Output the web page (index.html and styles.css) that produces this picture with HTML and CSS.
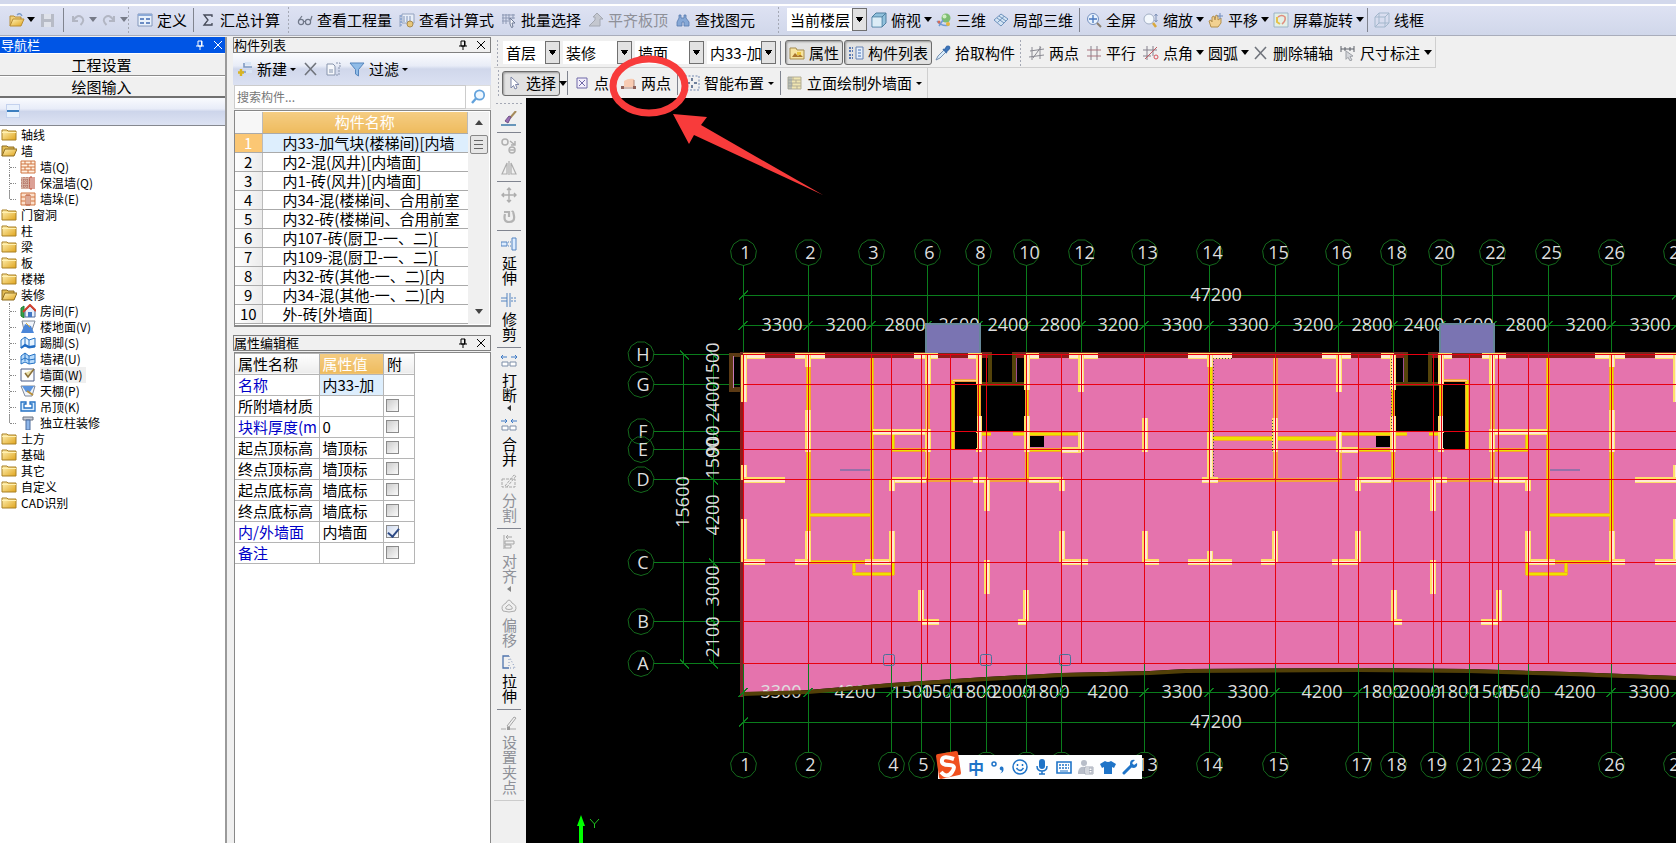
FILE: index.html
```html
<!DOCTYPE html>
<html lang="zh-CN">
<head>
<meta charset="utf-8">
<title>绘图输入</title>
<link rel="stylesheet" href="styles.css">
</head>
<body>
<svg class="sprite" aria-hidden="true">
  <defs>
    <linearGradient id="gold" x1="0" y1="0" x2="1" y2="1"><stop offset="0" stop-color="#fff3b8"/><stop offset="1" stop-color="#e0a41c"/></linearGradient>
  </defs>
  <symbol id="open" viewBox="0 0 16 16"><path d="M1 14V4h4l1 1h6v3" fill="#f0cf78" stroke="#b98e36"/><path d="M1 14l3-7h11l-3 7z" fill="url(#gold)" stroke="#b98e36"/><path d="M8 3q3-3 5 1" fill="none" stroke="#7d9cc9" stroke-width="1.4"/></symbol>
  <symbol id="save" viewBox="0 0 16 16"><path d="M1 2h13v13H1z" fill="#b7bbc6"/><path d="M4 2h7v5H4zM4 10h7v5H4z" fill="#dfe2ea"/></symbol>
  <symbol id="undo" viewBox="0 0 16 16"><path d="M2 4v5h5M2.500 8q4-6 8-3t-1 8" fill="none" stroke="#b2b6c3" stroke-width="2"/></symbol>
  <symbol id="redo" viewBox="0 0 16 16"><path d="M12 4v5H7M11.500 8q-4-6-8-3t1 8" fill="none" stroke="#b2b6c3" stroke-width="2"/></symbol>
  <symbol id="define" viewBox="0 0 16 16"><path d="M1 2h14v12H1z" fill="#e9f1fb" stroke="#8296ba"/><path d="M1 2h14v2H1z" fill="#8ca9d6"/><path d="M3 6h4v2H3zM9 6h4v2H9zM3 10h4v2H3zM9 10h4v2H9z" fill="#6b8cc4"/></symbol>
  <symbol id="sum" viewBox="0 0 16 16"><path d="M12 5V3H4l4 5-4 5h8v-2" fill="none" stroke="#444a58" stroke-width="1.300"/></symbol>
  <symbol id="glasses" viewBox="0 0 16 16"><g fill="none" stroke="#6f7788" stroke-width="1.200"><circle cx="4" cy="10" r="2.600"/><circle cx="11" cy="10" r="2.600"/><path d="M6.500 9.500h2M2 8l3-4M13.400 9L15 4"/></g></symbol>
  <symbol id="formula" viewBox="0 0 16 16"><path d="M1 3v12M3 2h12v9H3z" fill="#e8eef8" stroke="#93a2be"/><path d="M5 4v6M8 4v6M11 4v6" stroke="#7f93b8"/><circle cx="11" cy="12" r="3" fill="#e8c77a" stroke="#a88b4f"/><path d="M2 3v11" stroke="#6f93cc" stroke-dasharray="2 1"/></symbol>
  <symbol id="batch" viewBox="0 0 16 16"><path d="M1 3h13M1 6h13M1 9h7M2 2v10M5 2v10M8 2v6M12 2v5" stroke="#8d99b4"/><path d="M9 6l5 5h-3l1 4-1.500.5L9 12z" fill="#f4f6fb" stroke="#6f7b95"/></symbol>
  <symbol id="slab" viewBox="0 0 16 16"><path d="M1 14h11V7h3L9 1 5 5h2v3z" fill="#c4c7cf" stroke="#a4a8b2"/></symbol>
  <symbol id="find" viewBox="0 0 16 16"><path d="M4 3h2v3h3V3h2v3l3 4v4H9v-4H7v4H2v-4l2-4z" fill="#86a8d6" stroke="#5678ad" stroke-width=".8"/></symbol>
  <symbol id="cube" viewBox="0 0 16 16"><path d="M1 5l4-4h10v10l-4 4H1z" fill="#8fc0dc" stroke="#4f7f9f"/><path d="M1 5h10v10M11 5l4-4" fill="none" stroke="#4f7f9f"/><path d="M1.500 5.500h9v9h-9z" fill="#dcecf6"/></symbol>
  <symbol id="orbit" viewBox="0 0 16 16"><circle cx="10" cy="6" r="4.500" fill="#7dbd72"/><circle cx="8.500" cy="4.500" r="2" fill="#cfeec2"/><path d="M1 9q5 6 12 4M3 14l4-6" fill="none" stroke="#6f9bd6" stroke-width="1.500"/><circle cx="12" cy="12" r="2" fill="#e7b73e"/><circle cx="3" cy="10" r="1.500" fill="#d66a54"/></symbol>
  <symbol id="part3d" viewBox="0 0 16 16"><path d="M1 8l7-6 7 5-7 7z" fill="#d3e4f4" stroke="#6f93bd"/><path d="M4 6l7 5M6 4l7 5M4.500 10.500L11 4.500" stroke="#6f93bd"/></symbol>
  <symbol id="fit" viewBox="0 0 16 16"><circle cx="7" cy="7" r="5.500" fill="#e8f2fd" stroke="#7590bf"/><path d="M7 3v8M3 7h8" stroke="#4877bf" stroke-width="1.300"/><path d="M11 11l4 4" stroke="#8a7f70" stroke-width="2"/></symbol>
  <symbol id="zoom" viewBox="0 0 16 16"><circle cx="6" cy="7" r="5" fill="#f3f8fd" stroke="#a3b0c5"/><path d="M10 11l3 4" stroke="#d9a83c" stroke-width="2.500"/><path d="M13 2v8M11.500 4L13 2l1.500 2M11.500 8l1.500 2 1.500-2" fill="none" stroke="#7f93b8"/></symbol>
  <symbol id="hand" viewBox="0 0 16 16"><path d="M3 15L1 9l2-1 1 2V5l2-1 1 4 1-5 2 1v4l3-2v5l-3 4z" fill="#f2d190" stroke="#b4904d"/><path d="M12 1v6M9 4h6" stroke="#6f8cbd"/></symbol>
  <symbol id="spin" viewBox="0 0 16 16"><path d="M1 1h14v14H1z" fill="#e3efe6" stroke="#9cb3c5"/><path d="M5 5q4-3 7 0 1 4-3 7" fill="none" stroke="#e08d7e" stroke-width="1.600"/><path d="M4 5v5l3 2" fill="none" stroke="#e5c24c" stroke-width="2"/></symbol>
  <symbol id="wire" viewBox="0 0 16 16"><path d="M1 5l4-4h10v10l-4 4H1zM1 5h10v10M11 5l4-4M5 1v10h10M5 11l-4 4" fill="none" stroke="#a3b7cc"/></symbol>
  <symbol id="props" viewBox="0 0 16 16"><path d="M1 3h6l1 2h7v9H1z" fill="#f6e3a0" stroke="#a58b4e"/><path d="M3 12l3-4 3 3 2-2 3 3z" fill="#a9752e"/><path d="M8 7h4v3H8z" fill="#e9c53e"/></symbol>
  <symbol id="list" viewBox="0 0 16 16"><path d="M1 3h4M1 6h4M1 10h4M1 13h4" stroke="#5a7bb5" stroke-width="2" stroke-dasharray="2 1"/><path d="M8 2h7v12H8z" fill="#e4eefb" stroke="#6682b2"/><path d="M10 5h3M10 8h3M10 11h3" stroke="#4470b4"/></symbol>
  <symbol id="pick" viewBox="0 0 16 16"><path d="M1 15l2-4 6-6 2 2-6 6z" fill="#d9ecfb" stroke="#7590b0"/><path d="M8 4l4 4M9.500 5L12 1.500q3-1 2.500 2L11 7z" fill="#3c79c4" stroke="#3c6fae" stroke-width="1.500"/></symbol>
  <symbol id="two-axis" viewBox="0 0 16 16"><path d="M3 2v13M11 1v13M0 12l15-2M1 6l14-2M4 13l8-11" stroke="#8a8a92" fill="none"/></symbol>
  <symbol id="parallel" viewBox="0 0 16 16"><path d="M5 1v14M11 1v14" stroke="#85808c"/><path d="M1 5h14M1 11h14" stroke="#a9757e"/></symbol>
  <symbol id="angle" viewBox="0 0 16 16"><path d="M4 1v14M10 1v10M0 5h14M0 11h8" stroke="#85808c"/><path d="M2 14L14 2" stroke="#c25a62"/><circle cx="13" cy="12" r="2" fill="none" stroke="#d8545c"/></symbol>
  <symbol id="cross" viewBox="0 0 16 16"><path d="M2 2l11 12M13 2L2 14" stroke="#70747c" stroke-width="1.600"/></symbol>
  <symbol id="dim" viewBox="0 0 16 16"><path d="M1 1v6M14 1v6M1 4h13M5 2v4M10 2v4" stroke="#5c6068"/><path d="M6 6l7 5-3 .5 2 3.500-2 .8-2-3.500-2 2z" fill="#d4d6da" stroke="#9da0a6"/></symbol>
  <symbol id="cursor" viewBox="0 0 16 16"><path d="M5 2v11l2.500-2.500L9 14l2-1-1.500-3.500H13z" fill="#fff" stroke="#7d86a8"/></symbol>
  <symbol id="point" viewBox="0 0 16 16"><path d="M3 3h10v10H3zM5 5l6 6M11 5l-6 6" fill="#f3effb" stroke="#6f68a8"/></symbol>
  <symbol id="two-point" viewBox="0 0 16 16"><path d="M3 6q4-3 10-2v8H3z" fill="#f8cbb2"/><path d="M1 13h13M13 5v7" stroke="#b08476"/><path d="M0 11h3v3H0zM12 11h3v3h-3z" fill="#8d6058"/></symbol>
  <symbol id="smart" viewBox="0 0 16 16"><path d="M1 1h14v14H1z" fill="none" stroke="#7389b0" stroke-dasharray="2 1.500"/><path d="M8 3v3M8 10v3M3 8h3M10 8h3" stroke="#43597f" stroke-width="1.500"/></symbol>
  <symbol id="facade" viewBox="0 0 16 16"><path d="M1 2h13v12H1z" fill="#f0e6b2" stroke="#b3ad94"/><path d="M1 5h13M1 8h13M1 11h13M6 2v3M9 5v3M5 8v3M10 11v3" stroke="#b3ad94"/><path d="M1 2h4v12H1z" fill="#8797ae" opacity=".5"/></symbol>
  <symbol id="new" viewBox="0 0 16 16"><path d="M7 2v4h8M5 11h10" stroke="#7f9ac2" stroke-width="1.600" fill="none"/><path d="M8 1h6v3H8zM9 9h6v3H9z" fill="#d8e5f5"/><path d="M4 8v7M1 11.500h6" stroke="#d8b423" stroke-width="2.400"/></symbol>
  <symbol id="copy" viewBox="0 0 16 16"><path d="M1 3h6l2 2v9H1z" fill="#f5f7fb" stroke="#8895ad"/><path d="M3 8h4v4H3z" fill="#bcc5d4"/><path d="M10 2h4v5h-3M13 9v5h-3" stroke="#8895ad" fill="none" stroke-dasharray="2 1"/></symbol>
  <symbol id="funnel" viewBox="0 0 16 16"><path d="M1 2h14L9.500 8.500V15l-3-2V8.500z" fill="#90bce8" stroke="#5585bd"/></symbol>
  <symbol id="lens" viewBox="0 0 16 16"><circle cx="9.500" cy="6" r="4.700" fill="#eef7ff" stroke="#62a2dc" stroke-width="1.700"/><path d="M6 9.500L2 14" stroke="#62a2dc" stroke-width="2.400"/></symbol>
  <symbol id="pin" viewBox="0 0 10 10"><path d="M3 1h4v5H3zM1 6h8M5 6v4M6.500 1v5" fill="none" stroke="currentColor"/></symbol>
  <symbol id="close" viewBox="0 0 10 10"><path d="M1 1l8 8M9 1L1 9" stroke="currentColor"/></symbol>
  <symbol id="folder" viewBox="0 0 16 14"><path d="M1 12V2h5l1 1h8v9z" fill="url(#gold)" stroke="#a98025"/><path d="M1 4.500h14" stroke="#fff0b0"/></symbol>
  <symbol id="folder-open" viewBox="0 0 16 14"><path d="M1 12V2h5l1 1h6v2" fill="#e3bd55" stroke="#8e6c20"/><path d="M1 12l3-7h12l-3 7z" fill="url(#gold)" stroke="#8e6c20"/></symbol>
  <symbol id="wall" viewBox="0 0 16 14"><path d="M1 1h14v12H1zM1 4h14M1 7h14M1 10h14M5 1v3M11 1v3M8 4v3M5 7v3M11 7v3M8 10v3" fill="#fff1e2" stroke="#cf7440"/></symbol>
  <symbol id="wall-warm" viewBox="0 0 16 14"><path d="M1 1h9v12H1z" fill="#d6b0a0"/><path d="M1 4h9M1 7h9M1 10h9M4 1v12M7 1v12" stroke="#a8675a" stroke-dasharray="1 1"/><path d="M10 1h2v12h-2zM14 1v12" fill="#fff" stroke="#b8432c"/></symbol>
  <symbol id="wall-pier" viewBox="0 0 16 14"><path d="M1 1h14v12H1zM1 5h4M1 9h4M11 5h4M11 9h4" fill="#fbe0cc" stroke="#cf7440"/><path d="M6 3h4v10H6zM8 3v10" fill="#fff" stroke="#b8532c"/></symbol>
  <symbol id="room" viewBox="0 0 16 14"><path d="M1 4l3-2v12l-3-2z" fill="#36a34a" stroke="#1f7d33"/><path d="M5 7l5-5 5 5v6H5z" fill="#e6eefb" stroke="#4d6b9e"/><path d="M3 8l7-7 6 6" fill="none" stroke="#d2402d" stroke-width="2"/><path d="M8 8h4v5H8z" fill="#4377c4"/></symbol>
  <symbol id="floor" viewBox="0 0 16 14"><path d="M2 1h13l-3 9H4z" fill="#f1f5fb" stroke="#7f8898"/><path d="M5 4l6 2 3 7H1z" fill="#4b86d8"/><path d="M6 3l4 4" stroke="#d7aa3e"/></symbol>
  <symbol id="skirt" viewBox="0 0 16 14"><path d="M1 4l4-3 4 3 6-2v9l-6 1-4-2-4 2zM5 1v8M9 4v8" fill="#e8f4ff" stroke="#2472c4"/><path d="M1 12l4-3 4 2 6-1" fill="none" stroke="#1f6bc4" stroke-width="2"/></symbol>
  <symbol id="dado" viewBox="0 0 16 14"><path d="M1 4l4-3 4 3 6-2v9l-6 1-4-2-4 2zM5 1v8M9 4v8" fill="#b9dbfb" stroke="#2472c4"/><path d="M1 8l4-2 4 2 6-1" fill="none" stroke="#2472c4"/></symbol>
  <symbol id="face" viewBox="0 0 16 14"><path d="M1 1h13v12H1z" fill="#fdfdfd" stroke="#4a5c86"/><path d="M5 5l3 4 6-8" fill="#eadfa8" stroke="#8a7038" stroke-width="1.500"/></symbol>
  <symbol id="ceil" viewBox="0 0 16 14"><path d="M1 2h14l-3 10H5z" fill="#f1f5fb" stroke="#7f8898"/><path d="M2 2h12l-4 6H6z" fill="#5b94de"/><path d="M7 7l6 4" stroke="#b98f3a" stroke-width="2"/></symbol>
  <symbol id="hang" viewBox="0 0 16 14"><path d="M1 2h5v2H4v4h8V4h-2V2h5v9H1z" fill="#d8edff" stroke="#2472c4" stroke-width="1.300"/></symbol>
  <symbol id="column" viewBox="0 0 16 14"><path d="M3 1h10v3H3z" fill="#c7ccd6" stroke="#6b7280"/><path d="M6 4h4v10H6z" fill="#8fb7ea" stroke="#4d6c9c"/></symbol>
  <symbol id="brush" viewBox="0 0 16 16"><path d="M15 0L9 7" stroke="#a58a5a" stroke-width="2"/><path d="M10 6l-3 6-3-2 4-5z" fill="#9b6fb5" stroke="#6f5285"/><path d="M0 14h15" stroke="#3b79a8" stroke-width="1.500"/></symbol>
  <symbol id="dup" viewBox="0 0 16 16"><g fill="none" stroke="#b0b0b0" stroke-width="1.500"><circle cx="4" cy="4" r="3"/><circle cx="11" cy="12" r="3"/><path d="M9 12h4M9 3l5 4M14 3v4h-4"/></g></symbol>
  <symbol id="mirror" viewBox="0 0 16 16"><path d="M1 14L6 3v11zM15 14L10 3v11zM8 1v14" fill="none" stroke="#adadad" stroke-width="1.200"/></symbol>
  <symbol id="move" viewBox="0 0 16 16"><path d="M8 1v14M1 8h14M6 3l2-2 2 2M6 13l2 2 2-2M3 6L1 8l2 2M13 6l2 2-2 2" fill="none" stroke="#adadad" stroke-width="1.400"/></symbol>
  <symbol id="rotate" viewBox="0 0 16 16"><path d="M3 3h5v5M4 5q-2 8 4 8t5-6-2-4" fill="none" stroke="#b3b3b3" stroke-width="2.200"/></symbol>
  <symbol id="extend" viewBox="0 0 16 16"><path d="M11 2h4v12h-4zM0 6h6v4H0z" fill="#dcecff" stroke="#5484c0"/><path d="M7 6h4M7 10h4" stroke="#5484c0" stroke-dasharray="1 1"/></symbol>
  <symbol id="trim" viewBox="0 0 16 16"><path d="M6 1v14M9 1v14M0 6h6M0 9h6" stroke="#5484c0"/><path d="M10 6h6M10 9h6" stroke="#5484c0" stroke-dasharray="2 1"/></symbol>
  <symbol id="break" viewBox="0 0 16 16"><path d="M1 9h6v4H1zM9 9h6v4H9z" fill="#fff" stroke="#7c8ea8"/><path d="M0 4h6M2 2L0 4l2 2M10 4h6M14 2l2 2-2 2" stroke="#3e7ac6" fill="none"/></symbol>
  <symbol id="merge" viewBox="0 0 16 16"><path d="M1 9h6v4H1zM9 9h6v4H9z" fill="#fff" stroke="#7c8ea8"/><path d="M0 4h6M4 2l2 2-2 2M10 4h6M12 2l-2 2 2 2" stroke="#3e7ac6" fill="none"/></symbol>
  <symbol id="split" viewBox="0 0 16 16"><path d="M1 6h13v8H1zM4 13l9-11 2 1L6 14" fill="none" stroke="#a8a8a8" stroke-dasharray="3 1"/></symbol>
  <symbol id="align" viewBox="0 0 16 16"><path d="M3 1v14M4 7h9v3H4zM4 11h6v3H4zM5 3h6M7 1L5 3l2 2" fill="none" stroke="#a5a5a5"/></symbol>
  <symbol id="offset" viewBox="0 0 16 16"><path d="M5 5q3-6 6 0 6 3 3 8-6 2-12 0-3-5 3-8zM6 8q2-3 4 0 2 2 1 3-3 1-6 0-1-2 1-3z" fill="none" stroke="#acacac"/></symbol>
  <symbol id="stretch" viewBox="0 0 16 16"><path d="M8 2H2v12h6" fill="none" stroke="#4f74ad" stroke-width="1.300"/><path d="M8 2l6 12M8 5v8M9 14h6" stroke="#7f93b8" stroke-dasharray="1 2"/></symbol>
  <symbol id="grip-edit" viewBox="0 0 16 16"><path d="M6 11l7-9 2 1-7 9z" fill="none" stroke="#a5a5a5"/><path d="M0 14h5M9 14h6" stroke="#aaa"/><path d="M6 12h3v3H6z" fill="#999"/></symbol>
</svg>

<header class="topbar">
  <div class="group files">
    <button aria-label="打开"><svg><use href="#open"/></svg><i class="caret"></i></button>
    <button aria-label="保存"><svg><use href="#save"/></svg></button>
    <span class="sep"></span>
    <button class="off" aria-label="撤销"><svg><use href="#undo"/></svg><i class="caret"></i></button>
    <button class="off" aria-label="恢复"><svg><use href="#redo"/></svg><i class="caret"></i></button>
  </div>
  <div class="group calc">
    <span class="grip"></span>
    <button><svg><use href="#define"/></svg>定义</button>
    <span class="sep"></span>
    <button><svg><use href="#sum"/></svg>汇总计算</button>
  </div>
  <div class="group query">
    <span class="grip"></span>
    <button><svg><use href="#glasses"/></svg>查看工程量</button>
    <button><svg><use href="#formula"/></svg>查看计算式</button>
    <button><svg><use href="#batch"/></svg>批量选择</button>
    <button class="off"><svg><use href="#slab"/></svg>平齐板顶</button>
    <button><svg><use href="#find"/></svg>查找图元</button>
  </div>
  <div class="group view">
    <span class="grip"></span>
    <span class="combo wide"><select aria-label="显示范围"><option>当前楼层</option></select></span>
    <button class="drop"><svg><use href="#cube"/></svg>俯视<i class="caret"></i></button>
    <button><svg><use href="#orbit"/></svg>三维</button>
    <button><svg><use href="#part3d"/></svg>局部三维</button>
    <span class="sep"></span>
    <button><svg><use href="#fit"/></svg>全屏</button>
    <button class="drop"><svg><use href="#zoom"/></svg>缩放<i class="caret"></i></button>
    <button class="drop"><svg><use href="#hand"/></svg>平移<i class="caret"></i></button>
    <button class="drop"><svg><use href="#spin"/></svg>屏幕旋转<i class="caret"></i></button>
    <span class="sep"></span>
    <button><svg><use href="#wire"/></svg>线框</button>
  </div>
</header>

<div class="main">
  <nav class="nav">
    <h2 class="title active">导航栏<span><button aria-label="固定导航栏"><svg><use href="#pin"/></svg></button><button aria-label="关闭导航栏"><svg><use href="#close"/></svg></button></span></h2>
    <button class="tab">工程设置</button>
    <button class="tab">绘图输入</button>
    <div class="strip"><button class="collapse" aria-label="折叠"></button></div>
    <ul class="tree">
      <li><div><svg><use href="#folder"/></svg>轴线</div></li>
      <li><div><svg><use href="#folder-open"/></svg>墙</div>
        <ul>
          <li><div><svg><use href="#wall"/></svg>墙(Q)</div></li>
          <li><div><svg><use href="#wall-warm"/></svg>保温墙(Q)</div></li>
          <li><div><svg><use href="#wall-pier"/></svg>墙垛(E)</div></li>
        </ul></li>
      <li><div><svg><use href="#folder"/></svg>门窗洞</div></li>
      <li><div><svg><use href="#folder"/></svg>柱</div></li>
      <li><div><svg><use href="#folder"/></svg>梁</div></li>
      <li><div><svg><use href="#folder"/></svg>板</div></li>
      <li><div><svg><use href="#folder"/></svg>楼梯</div></li>
      <li><div><svg><use href="#folder-open"/></svg>装修</div>
        <ul>
          <li><div><svg><use href="#room"/></svg>房间(F)</div></li>
          <li><div><svg><use href="#floor"/></svg>楼地面(V)</div></li>
          <li><div><svg><use href="#skirt"/></svg>踢脚(S)</div></li>
          <li><div><svg><use href="#dado"/></svg>墙裙(U)</div></li>
          <li><div><svg><use href="#face"/></svg><span class="current">墙面(W)</span></div></li>
          <li><div><svg><use href="#ceil"/></svg>天棚(P)</div></li>
          <li><div><svg><use href="#hang"/></svg>吊顶(K)</div></li>
          <li><div><svg><use href="#column"/></svg>独立柱装修</div></li>
        </ul></li>
      <li><div><svg><use href="#folder"/></svg>土方</div></li>
      <li><div><svg><use href="#folder"/></svg>基础</div></li>
      <li><div><svg><use href="#folder"/></svg>其它</div></li>
      <li><div><svg><use href="#folder"/></svg>自定义</div></li>
      <li><div><svg><use href="#folder"/></svg>CAD识别</div></li>
    </ul>
  </nav>

  <aside class="panels">
    <h2 class="title">构件列表<span><button aria-label="固定构件列表"><svg><use href="#pin"/></svg></button><button aria-label="关闭构件列表"><svg><use href="#close"/></svg></button></span></h2>
    <div class="panel-tools">
      <button><svg><use href="#new"/></svg>新建<i class="caret small"></i></button>
      <button aria-label="删除"><svg><use href="#cross"/></svg></button>
      <button aria-label="复制"><svg><use href="#copy"/></svg></button>
      <button><svg><use href="#funnel"/></svg>过滤<i class="caret small"></i></button>
    </div>
    <div class="search"><input type="text" aria-label="搜索构件" placeholder="搜索构件..."><button aria-label="搜索"><svg><use href="#lens"/></svg></button></div>
    <div class="list-box">
      <table class="list">
        <thead><tr><th class="num"></th><th>构件名称</th></tr></thead>
        <tbody>
          <tr class="sel"><th>1</th><td>内33-加气块(楼梯间)[内墙</td></tr>
          <tr><th>2</th><td>内2-混(风井)[内墙面]</td></tr>
          <tr><th>3</th><td>内1-砖(风井)[内墙面]</td></tr>
          <tr><th>4</th><td>内34-混(楼梯间、合用前室</td></tr>
          <tr><th>5</th><td>内32-砖(楼梯间、合用前室</td></tr>
          <tr><th>6</th><td>内107-砖(厨卫-一、二)[</td></tr>
          <tr><th>7</th><td>内109-混(厨卫-一、二)[</td></tr>
          <tr><th>8</th><td>内32-砖(其他-一、二)[内</td></tr>
          <tr><th>9</th><td>内34-混(其他-一、二)[内</td></tr>
          <tr><th>10</th><td>外-砖[外墙面]</td></tr>
        </tbody>
      </table>
      <div class="scroll"><i class="up"></i><i class="thumb"></i><i class="low"></i></div>
    </div>
    <h2 class="title">属性编辑框<span><button aria-label="固定属性编辑框"><svg><use href="#pin"/></svg></button><button aria-label="关闭属性编辑框"><svg><use href="#close"/></svg></button></span></h2>
    <div class="prop-box">
      <table class="props">
        <thead><tr><th class="key">属性名称</th><th class="hot">属性值</th><th class="add">附</th></tr></thead>
        <tbody>
          <tr><td class="blue">名称</td><td class="edit">内33-加</td><td></td></tr>
          <tr><td>所附墙材质</td><td></td><td><input type="checkbox" aria-label="所附墙材质 附加"></td></tr>
          <tr><td class="blue">块料厚度(m</td><td>0</td><td><input type="checkbox" aria-label="块料厚度 附加"></td></tr>
          <tr><td>起点顶标高</td><td>墙顶标</td><td><input type="checkbox" aria-label="起点顶标高 附加"></td></tr>
          <tr><td>终点顶标高</td><td>墙顶标</td><td><input type="checkbox" aria-label="终点顶标高 附加"></td></tr>
          <tr><td>起点底标高</td><td>墙底标</td><td><input type="checkbox" aria-label="起点底标高 附加"></td></tr>
          <tr><td>终点底标高</td><td>墙底标</td><td><input type="checkbox" aria-label="终点底标高 附加"></td></tr>
          <tr><td class="blue">内/外墙面</td><td>内墙面</td><td><input type="checkbox" aria-label="内/外墙面 附加" checked></td></tr>
          <tr><td class="blue">备注</td><td></td><td><input type="checkbox" aria-label="备注 附加"></td></tr>
        </tbody>
      </table>
    </div>
  </aside>

  <main class="work">
    <div class="row">
      <div class="group levels">
        <span class="grip"></span>
        <span class="combo short"><select aria-label="楼层"><option>首层</option></select></span>
        <span class="combo"><select aria-label="构件大类"><option>装修</option></select></span>
        <span class="combo"><select aria-label="构件类型"><option>墙面</option></select></span>
        <span class="combo"><select aria-label="构件"><option>内33-加气块</option></select></span>
        <span class="sep"></span>
        <button class="down"><svg><use href="#props"/></svg>属性</button>
        <button class="down"><svg><use href="#list"/></svg>构件列表</button>
        <button><svg><use href="#pick"/></svg>拾取构件</button>
      </div>
      <div class="group axes">
        <span class="grip"></span>
        <button><svg><use href="#two-axis"/></svg>两点</button>
        <button><svg><use href="#parallel"/></svg>平行</button>
        <button class="drop"><svg><use href="#angle"/></svg>点角<i class="caret"></i></button>
        <button class="drop">圆弧<i class="caret"></i></button>
        <button><svg><use href="#cross"/></svg>删除辅轴</button>
        <button><svg><use href="#dim"/></svg>尺寸标注<i class="caret"></i></button>
      </div>
    </div>
    <div class="row">
      <div class="group draw">
        <span class="grip"></span>
        <button class="down"><svg><use href="#cursor"/></svg>选择</button><i class="caret lone"></i>
        <span class="sep"></span>
        <button><svg><use href="#point"/></svg>点</button>
        <button class="two"><svg><use href="#two-point"/></svg>两点</button>
        <span class="sep"></span>
        <button><svg><use href="#smart"/></svg>智能布置<i class="caret small"></i></button>
        <span class="sep"></span>
        <button><svg><use href="#facade"/></svg>立面绘制外墙面<i class="caret small"></i></button>
      </div>
    </div>
    <div class="stage">
      <div class="edit-bar">
        <div class="edit-tools">
          <span class="grip flat"></span>
          <button aria-label="格式刷"><svg><use href="#brush"/></svg></button>
          <span class="sep"></span>
          <button class="off" aria-label="复制图元"><svg><use href="#dup"/></svg></button>
          <button class="off" aria-label="镜像"><svg><use href="#mirror"/></svg></button>
          <span class="sep"></span>
          <button class="off" aria-label="移动"><svg><use href="#move"/></svg></button>
          <button class="off" aria-label="旋转"><svg><use href="#rotate"/></svg></button>
          <span class="sep"></span>
          <button><svg><use href="#extend"/></svg><b>延伸</b></button>
          <button><svg><use href="#trim"/></svg><b>修剪</b></button>
          <span class="sep"></span>
          <button><svg><use href="#break"/></svg><b>打断</b><i class="caret side"></i></button>
          <button><svg><use href="#merge"/></svg><b>合并</b></button>
          <button class="off"><svg><use href="#split"/></svg><b>分割</b></button>
          <span class="sep"></span>
          <button class="off"><svg><use href="#align"/></svg><b>对齐</b><i class="caret side"></i></button>
          <button class="off"><svg><use href="#offset"/></svg><b>偏移</b></button>
          <button><svg><use href="#stretch"/></svg><b>拉伸</b></button>
          <span class="sep"></span>
          <button class="off"><svg><use href="#grip-edit"/></svg><b>设置夹点</b></button>
        </div>
      </div>
      <div class="canvas">
        <svg id="plan" class="plan" viewBox="526 98 1150 745" preserveAspectRatio="xMinYMin slice" role="img" aria-label="首层平面图"></svg>
        <div class="ime">
          <svg class="ime-logo" viewBox="0 0 28 28"><path d="M2 5q0-2 2-2L22 0q2 0 2 2l3 20q0 2-2 2L7 28q-2 0-2-2z" fill="#f0501e"/><path d="M20 8q-11-4-12 1t7 5 3 7-11 0" fill="none" stroke="#fff" stroke-width="4"/></svg>
          <button class="zh">中</button>
          <button aria-label="标点"><svg viewBox="0 0 16 16"><circle cx="4" cy="5" r="2" fill="none" stroke="#1f74c8" stroke-width="1.500"/><path d="M13 8a2 2 0 1 0-1 3.500q0 2-2 3 4-1 3.500-5z" fill="#1f74c8"/></svg></button>
          <button aria-label="表情"><svg viewBox="0 0 16 16"><g fill="none" stroke="#1f74c8" stroke-width="1.500"><circle cx="8" cy="8" r="7"/><path d="M4.500 9q3.500 5 7 0M5.500 5v2M10.500 5v2"/></g></svg></button>
          <button aria-label="语音"><svg viewBox="0 0 16 16"><rect x="5" y="0" width="6" height="10" rx="3" fill="#1f74c8"/><path d="M3 7q0 5 5 5t5-5M8 12v3M5 15h6" fill="none" stroke="#1f74c8" stroke-width="1.500"/></svg></button>
          <button aria-label="键盘"><svg viewBox="0 0 16 16"><path d="M1 3h14v11H1z" fill="none" stroke="#1f74c8" stroke-width="1.600"/><path d="M3 6h10M3 9h10" stroke="#1f74c8" stroke-width="1.500" stroke-dasharray="2 1"/><path d="M4 12h8" stroke="#1f74c8"/></svg></button>
          <button aria-label="用户"><svg viewBox="0 0 16 16"><circle cx="6" cy="4" r="3" fill="#b8bec9"/><path d="M0 13q1-6 7-5v7H0z" fill="#b8bec9"/><path d="M7 8h8v7H7zM9 9v5M11 9h3v5h-3zM11 11.500h3" fill="#fff" stroke="#a4abb8"/></svg></button>
          <button aria-label="皮肤"><svg viewBox="0 0 16 16"><path d="M5 2q3 2 6 0l5 3-2 4-2-1v7H4V8L2 9 0 5z" fill="#1f74c8"/></svg></button>
          <button aria-label="工具"><svg viewBox="0 0 16 16"><path d="M2 14l7-7" stroke="#1f74c8" stroke-width="3" stroke-linecap="round"/><path d="M13 1q-5-1-5 4 0 4 4 4 4-1 3-5l-3 2-2-2z" fill="#1f74c8"/></svg></button>
        </div>
      </div>
    </div>
    <svg class="callout" viewBox="0 0 340 170" aria-hidden="true"><ellipse cx="155" cy="49" rx="36" ry="27" fill="none" stroke="#f83b3b" stroke-width="7"/><path d="M179 77l34 3-6 8 122 70-129-60-5 9z" fill="#f83b3b"/></svg>
  </main>
</div>
<script src="plan.js"></script>
</body>
</html>
```
FILE: styles.css
```css
* { box-sizing: border-box; }
body {
  margin: 0;
  height: 100vh;
  overflow: hidden;
  display: flex;
  flex-direction: column;
  background: #f0f0f0;
  color: #000;
  font: 15px/20px "Noto Sans CJK SC", sans-serif;
}
.sprite { position: absolute; width: 0; height: 0; }
button {
  display: flex;
  align-items: center;
  gap: 4px;
  padding: 0;
  border: 0;
  background: none;
  color: inherit;
  font: inherit;
  white-space: nowrap;
}
button svg { width: 16px; height: 16px; flex: none; }
.off { color: #8e9098; }

/* toolbars */
.topbar {
  flex: none;
  display: flex;
  height: 36px;
  padding-top: 4px;
  border-bottom: 1px solid #a9adbb;
  background: linear-gradient(#d2d8ec 4px, #fff 4px, #fff 6px, #dee2f3 6px, #d0d7ea);
}
.group { display: flex; align-items: center; gap: 7px; height: 31px; flex: none; }
.files { width: 127px; padding-left: 9px; gap: 5px; }
.files button { gap: 2px; }
.files .sep { margin: 0 2px; }
.calc { width: 160px; }
.query { width: 490px; }
.grip {
  flex: none;
  width: 3px;
  height: 28px;
  background: radial-gradient(circle, #a4a8b4 1px, transparent 1px) 0 0 / 3px 4px;
}
.sep { flex: none; width: 1px; height: 24px; margin: 0 -1px; background: #80848f; }
.caret {
  flex: none;
  border: 4px solid transparent;
  border-top: 5px solid #000;
  border-bottom: 0;
}
.off .caret { border-top-color: #777b88; }
.caret.small { border-width: 3px 3px 0; }
.drop { margin-right: -3px; }
.drop .caret { margin-left: -1px; }
.combo { position: relative; flex: none; width: 69px; height: 23px; }
.combo.wide { width: 80px; margin-right: -3px; }
.combo.short { width: 57px; }
.combo select {
  appearance: none;
  width: 100%;
  height: 100%;
  padding: 0 14px 0 3px;
  border: 0;
  border-radius: 0;
  background: #fff;
  color: #000;
  font: inherit;
  overflow: hidden;
}
.combo::after {
  content: "";
  position: absolute;
  top: 0;
  right: 0;
  bottom: 0;
  width: 13px;
  border: 1px solid #707070;
  background: conic-gradient(from -39deg at 50% 100%, #000 78deg, transparent 0) center / 9px 5px no-repeat, #e2e2e2;
  pointer-events: none;
}
.main { flex: 1; display: flex; min-height: 0; padding-top: 1px; }
.row { display: flex; border-bottom: 1px solid #cfcfcf; height: 31px; width: max-content; border-right: 1px solid #cfcfcf; }
.levels { padding-left: 2px; gap: 3px; width: 525px; }
.levels .grip { margin-right: 1px; }
.levels .sep { margin: 0 1px; }
.down {
  height: 25px;
  padding: 0 3px;
  border: 1px solid #6c6c6c;
  border-radius: 3px;
  background: #e2e2e2;
  box-shadow: inset 1px 1px 2px #999;
}
.levels .down + .down { margin-left: -2px; }
.axes { padding-right: 3px; }
.draw { padding: 0 5px 0 3px; }
.draw .grip { margin-right: -5px; }
.lone { margin: 0 -6px 0 -8px; }
.two { margin-left: 5px; }

/* docked panels */
.title {
  flex: none;
  display: flex;
  justify-content: space-between;
  align-items: center;
  height: 16px;
  margin: 0;
  padding: 0 4px 0 0;
  border: 1px solid #808080;
  font-size: 13px;
  font-weight: 400;
  line-height: 14px;
}
.title span { display: flex; gap: 8px; }
.title svg { width: 10px; height: 10px; }
.title.active { background: #0055e5; border-color: #0055e5; color: #fff; padding-right: 1px; }
.nav {
  flex: none;
  display: flex;
  flex-direction: column;
  width: 227px;
  border-right: 2px solid #9a9a9a;
}
.tab {
  justify-content: center;
  height: 23px;
  padding-right: 22px;
  border-bottom: 1px solid #8c8c8c;
  border-top: 1px solid #fff;
}
.tab + .tab { height: 22px; border-bottom: 2px solid #707070; }
.strip {
  height: 28px;
  padding: 6px;
  border-bottom: 1px solid #85888f;
  background: linear-gradient(#f6f8fd 2px, #e8ecf8 40%, #cdd5eb 50%, #dde3f3);
}
.collapse {
  width: 14px;
  height: 14px;
  border: 1px solid #c4d2ee;
  background: linear-gradient(#3d7fc0, #3d7fc0) center / 12px 2px no-repeat, #e9f1fc;
}
.tree, .tree ul { margin: 0; list-style: none; }
.tree { flex: 1; background: #fff; font-size: 12px; line-height: 16px; padding: 1px; }
.tree ul { padding: 0 0 0 8px; }
.tree div { display: flex; align-items: center; gap: 4px; height: 16px; }
.tree svg { width: 16px; height: 14px; flex: none; }
.tree ul li { border-left: 1px dotted #888; }
.tree ul li:last-child {
  border-image: linear-gradient(#999 50%, transparent 50%) 1;
}
.tree ul div::before { content: ""; width: 6px; border-top: 1px dotted #888; }
.current { background: #efefef; padding-right: 3px; }

.panels { flex: none; display: flex; flex-direction: column; width: 258px; margin-left: 6px; }
.panel-tools {
  display: flex;
  align-items: center;
  gap: 7px;
  height: 32px;
  padding-left: 4px;
  background: linear-gradient(#fbfcfe, #e8ecf7 40%, #d0d7eb 50%, #dbe1f2);
}
.panel-tools .caret { margin-left: -1px; }
.search { display: flex; height: 24px; margin-left: 1px; }
.search input {
  flex: 1;
  min-width: 0;
  padding: 0 2px;
  border: 1px solid #ccc;
  background: #fff;
  font: 12px/16px "Noto Sans CJK SC", sans-serif;
}
.search input::placeholder { color: #777; opacity: 1; }
.search button { width: 25px; justify-content: center; background: #fff; border: 1px solid #ddd; border-left: 0; }
.list-box {
  display: flex;
  flex: none;
  margin: 1px 0 8px 1px;
  padding: 1px 1px 1px 0;
  border: 1px solid #888;
  border-bottom-width: 2px;
  background: #fff;
}
table { border-collapse: collapse; table-layout: fixed; }
th, td { font-weight: 400; text-align: left; padding: 0; overflow: hidden; white-space: nowrap; }
.list { flex: 1; }
.list thead tr { height: 21px; }
.list tbody tr { height: 19px; }
.list th, .list td { line-height: 18px; border-bottom: 1px solid #aaa; }
.list td { padding-left: 20px; }
.list th { text-align: center; border-right: 1px solid #bbb; background: linear-gradient(90deg, #fff, #ebebeb); }
.list thead th { color: #fff; background: linear-gradient(#f5cd83, #eebb5e); }
.list thead .num { width: 27px; background: #f7f7f7; }
.list .sel th { background: #fbc774; color: #fff; }
.list .sel td { background: #ddeefd; }
.scroll { width: 21px; display: flex; flex-direction: column; align-items: center; background: #f0f0f0; padding: 8px 0 10px; }
.up, .low { border: 4px solid transparent; }
.up { border-bottom: 5px solid #444; border-top: 0; }
.low { margin-top: auto; border-top: 5px solid #444; border-bottom: 0; }
.thumb {
  width: 18px;
  height: 19px;
  margin-top: 10px;
  border: 1px solid #888;
  border-radius: 2px;
  background: repeating-linear-gradient(#666 0 1px, transparent 1px 4px) center / 9px 9px no-repeat, #e6e6e6;
}
.prop-box { flex: 1; margin: 1px 0 0 1px; border: 1px solid #888; border-bottom: 0; background: #fff; }
.props { width: 180px; }
.props tr { height: 21px; }
.props th, .props td { line-height: 20px; padding-left: 3px; border: 1px solid #b5b5b5; }
.props tr > :first-child { border-left: 0; }
.props th { background: linear-gradient(#fff, #ececec); }
.props .key { width: 84px; }
.props .add { width: 31px; }
.props .hot { color: #fff; background: linear-gradient(#f5cd83, #eebb5e); }
.props .blue { color: #0000c8; }
.props .edit { background: #ddeefd; }
.props input {
  appearance: none;
  display: block;
  width: 13px;
  height: 13px;
  margin: 0 0 0 -1px;
  border: 1px solid #8b8b8b;
  background: linear-gradient(135deg, #ccc, #fafafa);
}
.props input:checked { background: linear-gradient(135deg, #cdd9ee, #fff); }
.props input:checked::before {
  content: "";
  display: block;
  width: 5px;
  height: 9px;
  margin: 0 0 0 3px;
  border: solid #2e4b86;
  border-width: 0 2px 2px 0;
  transform: rotate(40deg);
}

/* drawing area */
.work { position: relative; flex: 1; min-width: 0; display: flex; flex-direction: column; margin-left: 3px; }
.work .row + .row { border-bottom: 0; height: 30px; }
.work .row + .row .group { height: 30px; }
.stage { flex: 1; display: flex; min-height: 0; }
.edit-bar { flex: none; width: 32px; }
.edit-tools {
  display: flex;
  flex-direction: column;
  align-items: center;
  gap: 6px;
  margin-right: 2px;
  padding: 4px 0 5px;
  border-bottom: 1px solid #ccc;
}
.edit-tools button { flex-direction: column; gap: 4px; }
.edit-tools b { font-weight: 400; writing-mode: vertical-rl; line-height: 16px; }
.edit-tools .sep { width: 24px; height: 1px; margin: -1px 0; }
.grip.flat { width: 28px; height: 3px; background-size: 4px 3px; }
.caret.side { border: 3px solid transparent; border-right: 4px solid #333; border-left: 0; margin-top: -2px; }
.off .caret.side { border-right-color: #888; border-top-color: transparent; }
.canvas { position: relative; flex: 1; min-width: 0; background: #000; overflow: hidden; }
.plan { display: block; width: 100%; height: 100%; font: 18px "Open Sans", "Noto Sans", sans-serif; }
.plan text { fill: #dedede; text-anchor: middle; }
.callout { position: absolute; left: 0; top: 0; width: 340px; height: 170px; pointer-events: none; }
.ime {
  position: absolute;
  left: 412px;
  top: 657px;
  display: flex;
  align-items: center;
  gap: 6px;
  height: 24px;
  padding-right: 4px;
  background: #fdfeff;
}
.ime-logo { width: 28px; height: 28px; margin: 0 0 4px -4px; }
.ime .zh { color: #1f74c8; font-weight: 700; font-size: 16px; }
```
FILE: plan.js
```js
(function () {
  var NS = 'http://www.w3.org/2000/svg';
  var svg = document.getElementById('plan');
  var MIRROR = 2420;

  function add(name, attrs, text) {
    var el = document.createElementNS(NS, name);
    Object.keys(attrs).forEach(function (k) { el.setAttribute(k, attrs[k]); });
    if (text) el.textContent = text;
    svg.appendChild(el);
  }
  function line(x1, y1, x2, y2, color) {
    add('path', { d: 'M' + x1 + ' ' + y1 + 'L' + x2 + ' ' + y2, stroke: color, fill: 'none', 'shape-rendering': 'crispEdges' });
  }
  function rect(x, y, w, h, fill) {
    add('rect', { x: x, y: y, width: w, height: h, fill: fill, 'shape-rendering': 'crispEdges' });
  }
  function label(x, y, text, turned) {
    var a = { x: x, y: y + 6 };
    if (turned) a.transform = 'rotate(-90 ' + x + ' ' + y + ')';
    add('text', a, text);
  }
  function bubble(x, y, text) {
    var pts = [];
    for (var i = 0; i < 11; i++) {
      var t = (i + 0.5) * 2 * Math.PI / 11;
      pts.push((x + 13 * Math.sin(t)).toFixed(1) + ',' + (y - 13 * Math.cos(t)).toFixed(1));
    }
    add('polygon', { points: pts.join(' '), fill: 'none', stroke: '#14691c' });
    label(x + (text.length > 1 ? 3 : 2), y, text);
  }

  var GREEN = '#0a7d1c', RED = '#e80010', PINK = '#e573ad', BROWN = '#524008', WALL = '#8e1c1a';
  var top = [[743.5, '1'], [808.5, '2'], [871.5, '3'], [927.5, '6'], [978.5, '8'], [1026.5, '10'], [1081.5, '12'],
    [1144.5, '13'], [1209.5, '14'], [1275.5, '15'], [1338.5, '16'], [1393.5, '18'], [1441.5, '20'], [1492.5, '22'],
    [1548.5, '25'], [1611.5, '26'], [1676.5, '27']];
  var bottom = [[743.5, '1'], [808.5, '2'], [891.5, '4'], [921.5, '5'], [950.5, '7'], [986.5, '9'], [1026.5, '10'],
    [1061.5, '11'], [1144.5, '13'], [1209.5, '14'], [1275.5, '15'], [1358.5, '17'], [1393.5, '18'], [1433.5, '19'],
    [1469.5, '21'], [1498.5, '23'], [1528.5, '24'], [1611.5, '26'], [1676.5, '27']];
  var side = [[354.5, 'H'], [384.5, 'G'], [431.5, 'F'], [449.5, 'E'], [479.5, 'D'], [562.5, 'C'], [621.5, 'B'], [663.5, 'A']];

  // dimension lines and grid heads
  line(743, 295.5, 1676, 295.5, GREEN);
  line(743, 325.5, 1676, 325.5, GREEN);
  line(683.5, 354, 683.5, 663, GREEN);
  line(713.5, 354, 713.5, 663, GREEN);
  top.forEach(function (a) {
    line(a[0], 265, a[0], 355, GREEN);
    line(a[0] - 5, 330, a[0] + 4, 321, GREEN);
    bubble(a[0], 252.5, a[1]);
  });
  side.forEach(function (a) {
    line(654, a[0], 743, a[0], GREEN);
    line(709, a[0] - 4, 718, a[0] + 5, GREEN);
    bubble(641, a[0], a[1]);
  });
  [354.5, 663.5].forEach(function (y) { line(680, y - 4, 689, y + 5, GREEN); });
  [295.5, 722.5].forEach(function (y) { line(739, y + 4, 748, y - 5, GREEN); line(1672, y + 4, 1681, y - 5, GREEN); });

  [[782, '3300'], [846, '3200'], [905, '2800'], [959, '2600'], [1008, '2400'], [1060, '2800'], [1118, '3200'],
    [1182, '3300'], [1248, '3300'], [1313, '3200'], [1372, '2800'], [1424, '2400'], [1473, '2600'], [1526, '2800'],
    [1586, '3200'], [1650, '3300']].forEach(function (d) { label(d[0], 325, d[1]); });
  label(1216, 295, '47200');
  [[363, '1500'], [402, '2400'], [441, '900'], [458, '1500'], [515, '4200'], [586, '3000'], [637, '2100']]
    .forEach(function (d) { label(713, d[0], d[1], true); });
  label(683, 502, '15600', true);

  // floor slab
  add('path', { d: 'M743 355H1676V676L1570 672 1469 669 1359 668 1186 669 1150 671 1062 673 986 677 892 683 808 690 743 694Z', fill: PINK });
  line(743, 692.5, 1676, 692.5, GREEN);
  line(743, 722.5, 1676, 722.5, GREEN);
  [[781, '3300'], [855, '4200'], [912, '1500'], [942, '1500'], [976, '1800'], [1012, '2000'], [1049, '1800'],
    [1108, '4200'], [1182, '3300'], [1248, '3300'], [1322, '4200'], [1382, '1800'], [1420, '2000'], [1458, '1800'],
    [1492, '1500'], [1520, '1500'], [1575, '4200'], [1649, '3300']].forEach(function (d) { label(d[0], 692, d[1]); });
  label(1216, 722, '47200');
  add('path', { d: 'M743 694L808 692 892 685 986 679 1062 675 1150 673 1186 671 1359 670 1469 671 1570 674 1676 678', fill: 'none', stroke: BROWN, 'stroke-width': 4 });
  rect(740, 355, 4, 342, '#7d2426');
  rect(740, 402, 4, 63, WALL);
  rect(740, 352, 936, 6, WALL);
  rect(740, 352, 936, 2, '#6e2a22');
  bottom.forEach(function (a) {
    line(a[0], 663, a[0], 752, GREEN);
    line(a[0] - 5, 697, a[0] + 4, 688, GREEN);
    bubble(a[0], 765, a[1]);
  });

  function both(x, y, w, h, draw) {
    draw(x, y, w, h);
    draw(MIRROR - x - w, y, w, h);
  }
  function fill(color) { return function (x, y, w, h) { rect(x, y, w, h, color); }; }
  function wall(x, y, w, h) {
    rect(x, y, w, h, '#f6a52c');
    if (w > h) rect(x, y + 1, w, h - 2, '#ece400'); else rect(x + 1, y, w - 2, h, '#ece400');
  }
  function peach(x, y, w, h) {
    rect(x, y, w, h, '#f3a23c');
    if (w > h) rect(x, y + 1, w, 1, '#ffd08a'); else rect(x + 1, y, 1, h, '#ffd08a');
  }
  function column(x, y, w, h) {
    rect(x, y, w, h, '#ffe06a');
    if (w > h) rect(x, y + 2, w, h - 3, '#ffe9d2'); else rect(x + 2, y, w - 3, h, '#ffe9d2');
  }

  // shafts and stair openings
  [[955, 382, 22, 67], [981, 386, 44, 45], [981, 358, 43, 24], [1029, 434, 15, 13], [992, 352, 20, 6]]
    .forEach(function (r) { both(r[0], r[1], r[2], r[3], fill('#000')); });
  [[988, 353, 4, 29], [1012, 353, 4, 29], [981, 382, 44, 4]]
    .forEach(function (r) { both(r[0], r[1], r[2], r[3], fill('#54430a')); });
  both(1016, 358, 1, 24, fill('#9d4f94'));
  rect(729, 353, 4, 39, '#5c3a14');
  rect(729, 353, 11, 4, '#5c3a14');
  rect(729, 387, 12, 5, '#5c3a14');
  line(733.5, 356, 733.5, 388, '#c878b8');
  both(925, 323, 56, 30, fill('#668799'));
  both(927, 325, 52, 28, fill('#7a74b2'));
  both(840, 469, 30, 2, fill('#9670a8'));

  [[806, 358, 5, 204], [870, 358, 4, 204], [951, 380, 4, 69], [977, 385, 4, 46], [1025, 390, 4, 90],
    [980, 432, 11, 4], [1013, 432, 68, 4], [892, 448, 34, 4], [1027, 448, 35, 4], [891, 433, 4, 17],
    [810, 560, 55, 4], [852, 563, 4, 12], [853, 572, 41, 4], [891, 563, 4, 12], [810, 513, 60, 4]]
    .forEach(function (r) { both(r[0], r[1], r[2], r[3], wall); });
  [[925, 385, 5, 95], [953, 379, 25, 3], [892, 478, 171, 4]]
    .forEach(function (r) { both(r[0], r[1], r[2], r[3], peach); });
  wall(1208, 367, 5, 64);
  wall(1213, 436, 125, 5);
  peach(1273, 358, 5, 122);
  peach(1338, 431, 4, 49);
  peach(1210, 478, 130, 4);

  [[743, 353, 22, 6], [741, 355, 6, 47], [795, 353, 30, 6], [805, 355, 6, 12], [914, 353, 24, 6], [925, 355, 6, 30],
    [968, 353, 14, 6], [976, 355, 6, 30], [1026, 353, 13, 6], [1024, 355, 6, 35], [1069, 353, 29, 6], [1078, 355, 6, 37],
    [805, 410, 6, 42], [741, 465, 6, 15], [743, 477, 42, 6], [873, 429, 54, 6], [925, 429, 6, 23], [1062, 447, 20, 6],
    [1078, 431, 6, 21], [1142, 418, 6, 34], [1024, 416, 6, 36], [976, 416, 6, 36], [892, 477, 34, 6], [973, 477, 15, 6],
    [1029, 477, 34, 6], [889, 479, 6, 12], [984, 479, 6, 32], [1059, 479, 6, 12], [805, 531, 6, 31], [795, 559, 13, 6],
    [865, 559, 27, 6], [889, 531, 6, 31], [741, 519, 6, 43], [744, 559, 21, 6], [984, 560, 6, 34], [918, 590, 6, 32],
    [922, 619, 17, 6], [1023, 590, 6, 32], [1018, 619, 8, 6], [1059, 531, 6, 31], [1061, 559, 27, 6],
    [1142, 531, 6, 31], [1144, 559, 15, 6]]
    .forEach(function (r) { both(r[0], r[1], r[2], r[3], column); });
  column(1188, 353, 44, 6);
  column(1207, 355, 6, 12);
  column(1207, 431, 6, 49);
  column(1202, 477, 16, 6);
  column(1188, 559, 44, 6);
  column(1207, 551, 6, 11);

  // axes over the slab
  top.concat(bottom).forEach(function (a) {
    line(a[0], 355, a[0], 663, RED);
  });
  side.forEach(function (a) { line(743, a[0], 1676, a[0], RED); });
  // the upper shafts hide the axes that run behind them
  both(955, 386, 22, 45, fill('#000'));
  both(955, 433, 22, 15, fill('#000'));
  both(988, 387, 36, 43, fill('#000'));

  add('path', { d: 'M1213.5 476V358.5H1232M1391.5 359V430M1272.5 420V452', fill: 'none', stroke: '#444', 'stroke-dasharray': '1 2' });
  [883, 980, 1059].forEach(function (x) {
    add('rect', { x: x + 0.5, y: 654.5, width: 11, height: 11, rx: 2, fill: 'none', stroke: '#46739a' });
  });

  // drawing origin
  add('path', { d: 'M579 843V826H577L581 815 585 826H583V843Z', fill: '#0f0' });
  add('path', { d: 'M590 819L594.5 824 599 819M594.5 824V828', fill: 'none', stroke: '#1fc01f' });
})();
```
